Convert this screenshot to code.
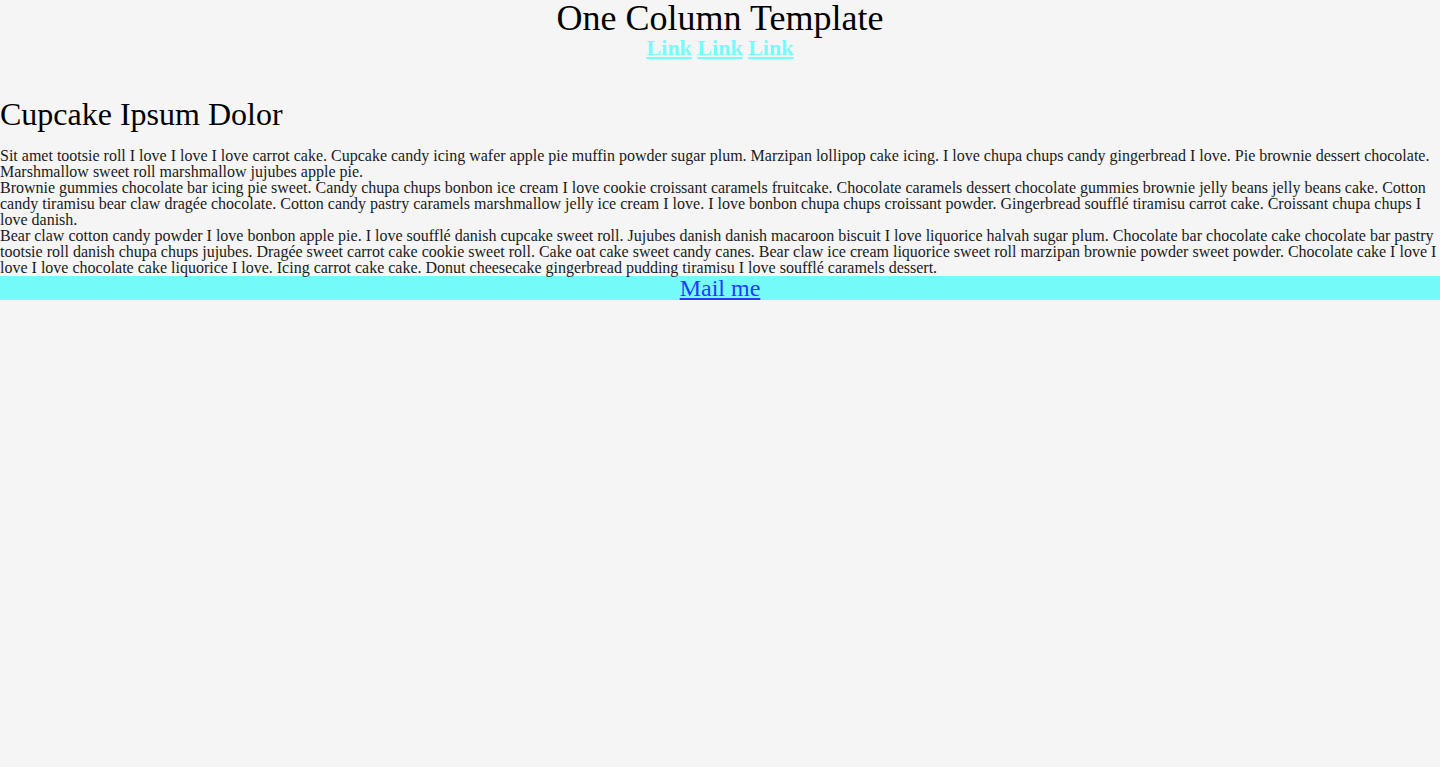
export default function App() {
  return (
    <div className="min-h-[767px] bg-[#f5f5f5] font-['Liberation_Serif','Times_New_Roman',serif] text-black">
      {/* Header */}
      <header className="text-center">
        <h1 className="text-[36px] leading-[36px]">One Column Template</h1>
        <nav className="text-[22px] leading-[24px] font-bold">
          <a href="#" className="text-[#77fbfb] underline">Link</a>{" "}
          <a href="#" className="text-[#77fbfb] underline">Link</a>{" "}
          <a href="#" className="text-[#77fbfb] underline">Link</a>
        </nav>
      </header>

      {/* Main content */}
      <main>
        <h2 className="text-[32px] leading-[32px] mt-[38px] mb-[18px]">Cupcake Ipsum Dolor</h2>
        <div className="text-[16px] leading-[16px] text-[#1a1a1a]">
          <p>
            Sit amet tootsie roll I love I love I love carrot cake. Cupcake candy icing wafer apple pie muffin powder sugar plum. Marzipan lollipop cake icing. I love chupa chups candy gingerbread I love. Pie brownie dessert chocolate. Marshmallow sweet roll marshmallow jujubes apple pie.
          </p>
          <p>
            Brownie gummies chocolate bar icing pie sweet. Candy chupa chups bonbon ice cream I love cookie croissant caramels fruitcake. Chocolate caramels dessert chocolate gummies brownie jelly beans jelly beans cake. Cotton candy tiramisu bear claw dragée chocolate. Cotton candy pastry caramels marshmallow jelly ice cream I love. I love bonbon chupa chups croissant powder. Gingerbread soufflé tiramisu carrot cake. Croissant chupa chups I love danish.
          </p>
          <p>
            Bear claw cotton candy powder I love bonbon apple pie. I love soufflé danish cupcake sweet roll. Jujubes danish danish macaroon biscuit I love liquorice halvah sugar plum. Chocolate bar chocolate cake chocolate bar pastry tootsie roll danish chupa chups jujubes. Dragée sweet carrot cake cookie sweet roll. Cake oat cake sweet candy canes. Bear claw ice cream liquorice sweet roll marzipan brownie powder sweet powder. Chocolate cake I love I love I love chocolate cake liquorice I love. Icing carrot cake cake. Donut cheesecake gingerbread pudding tiramisu I love soufflé caramels dessert.
          </p>
        </div>
      </main>

      {/* Footer */}
      <footer className="bg-[#75fafa] text-center text-[24px] leading-[24px]">
        <a href="#" className="text-[#1f3cff] underline">Mail me</a>
      </footer>
    </div>
  );
}
